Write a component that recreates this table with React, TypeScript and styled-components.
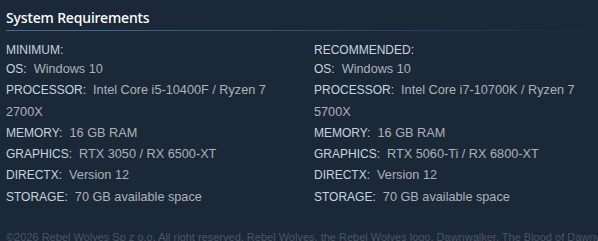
import React from 'react';
import styled, { createGlobalStyle } from 'styled-components';

const GlobalStyle = createGlobalStyle`
  html, body {
    margin: 0;
    padding: 0;
    background: #1b2838;
    overflow: hidden;
  }
`;

const Page = styled.div`
  padding: 8px 0 0 6px;
  font-family: 'Liberation Sans', Arial, sans-serif;
  font-size: 12px;
  color: #acb2b8;
`;

const Title = styled.h2`
  margin: 0;
  padding-bottom: 2px;
  font-family: 'Noto Sans', 'Open Sans', sans-serif;
  font-size: 14px;
  font-weight: 500;
  letter-spacing: -0.15px;
  line-height: 20px;
  color: #ffffff;
`;

const Divider = styled.div`
  height: 1px;
  background: linear-gradient(90deg, #3f7296 0%, #2f5672 45%, rgba(47, 86, 114, 0) 100%);
`;

const Columns = styled.div`
  display: grid;
  grid-template-columns: 284px 284px;
  column-gap: 24px;
  margin-top: 10px;
`;

const Column = styled.div`
  display: flex;
  flex-direction: column;
`;

const Heading = styled.div`
  line-height: 18px;
  color: #c6d4df;
`;

const List = styled.ul`
  list-style: none;
  margin: 0;
  padding: 0;
`;

const Item = styled.li`
  font-size: 12.7px;
  line-height: 21.3px;
`;

const Label = styled.span`
  font-size: 12px;
  color: #c6d4df;
`;

const Footer = styled.div`
  margin-top: 22px;
  white-space: nowrap;
  font-size: 11px;
  color: #4b5663;
  line-height: 14px;
`;

type Spec = { label: string; value: string };

const minimum: Spec[] = [
  { label: 'OS:', value: 'Windows 10' },
  { label: 'PROCESSOR:', value: 'Intel Core i5-10400F / Ryzen 7 2700X' },
  { label: 'MEMORY:', value: '16 GB RAM' },
  { label: 'GRAPHICS:', value: 'RTX 3050 / RX 6500-XT' },
  { label: 'DIRECTX:', value: 'Version 12' },
  { label: 'STORAGE:', value: '70 GB available space' },
];

const recommended: Spec[] = [
  { label: 'OS:', value: 'Windows 10' },
  { label: 'PROCESSOR:', value: 'Intel Core i7-10700K / Ryzen 7 5700X' },
  { label: 'MEMORY:', value: '16 GB RAM' },
  { label: 'GRAPHICS:', value: 'RTX 5060-Ti / RX 6800-XT' },
  { label: 'DIRECTX:', value: 'Version 12' },
  { label: 'STORAGE:', value: '70 GB available space' },
];

const RequirementColumn = ({ title, specs }: { title: string; specs: Spec[] }) => (
  <Column>
    <Heading>{title}</Heading>
    <List>
      {specs.map(({ label, value }) => (
        <Item key={label}>
          <Label>{label}</Label>&nbsp; {value}
        </Item>
      ))}
    </List>
  </Column>
);

export default function App() {
  return (
    <>
      <GlobalStyle />
      <Page>
        <Title>System Requirements</Title>
        <Divider />
        <Columns>
          <RequirementColumn title='MINIMUM:' specs={minimum} />
          <RequirementColumn title='RECOMMENDED:' specs={recommended} />
        </Columns>
        <Footer>
          ©2026 Rebel Wolves Sp z o.o. All right reserved. Rebel Wolves, the Rebel Wolves logo, Dawnwalker, The
          Blood of Dawnwalker and related marks are trademarks of Rebel Wolves.
        </Footer>
      </Page>
    </>
  );
}
